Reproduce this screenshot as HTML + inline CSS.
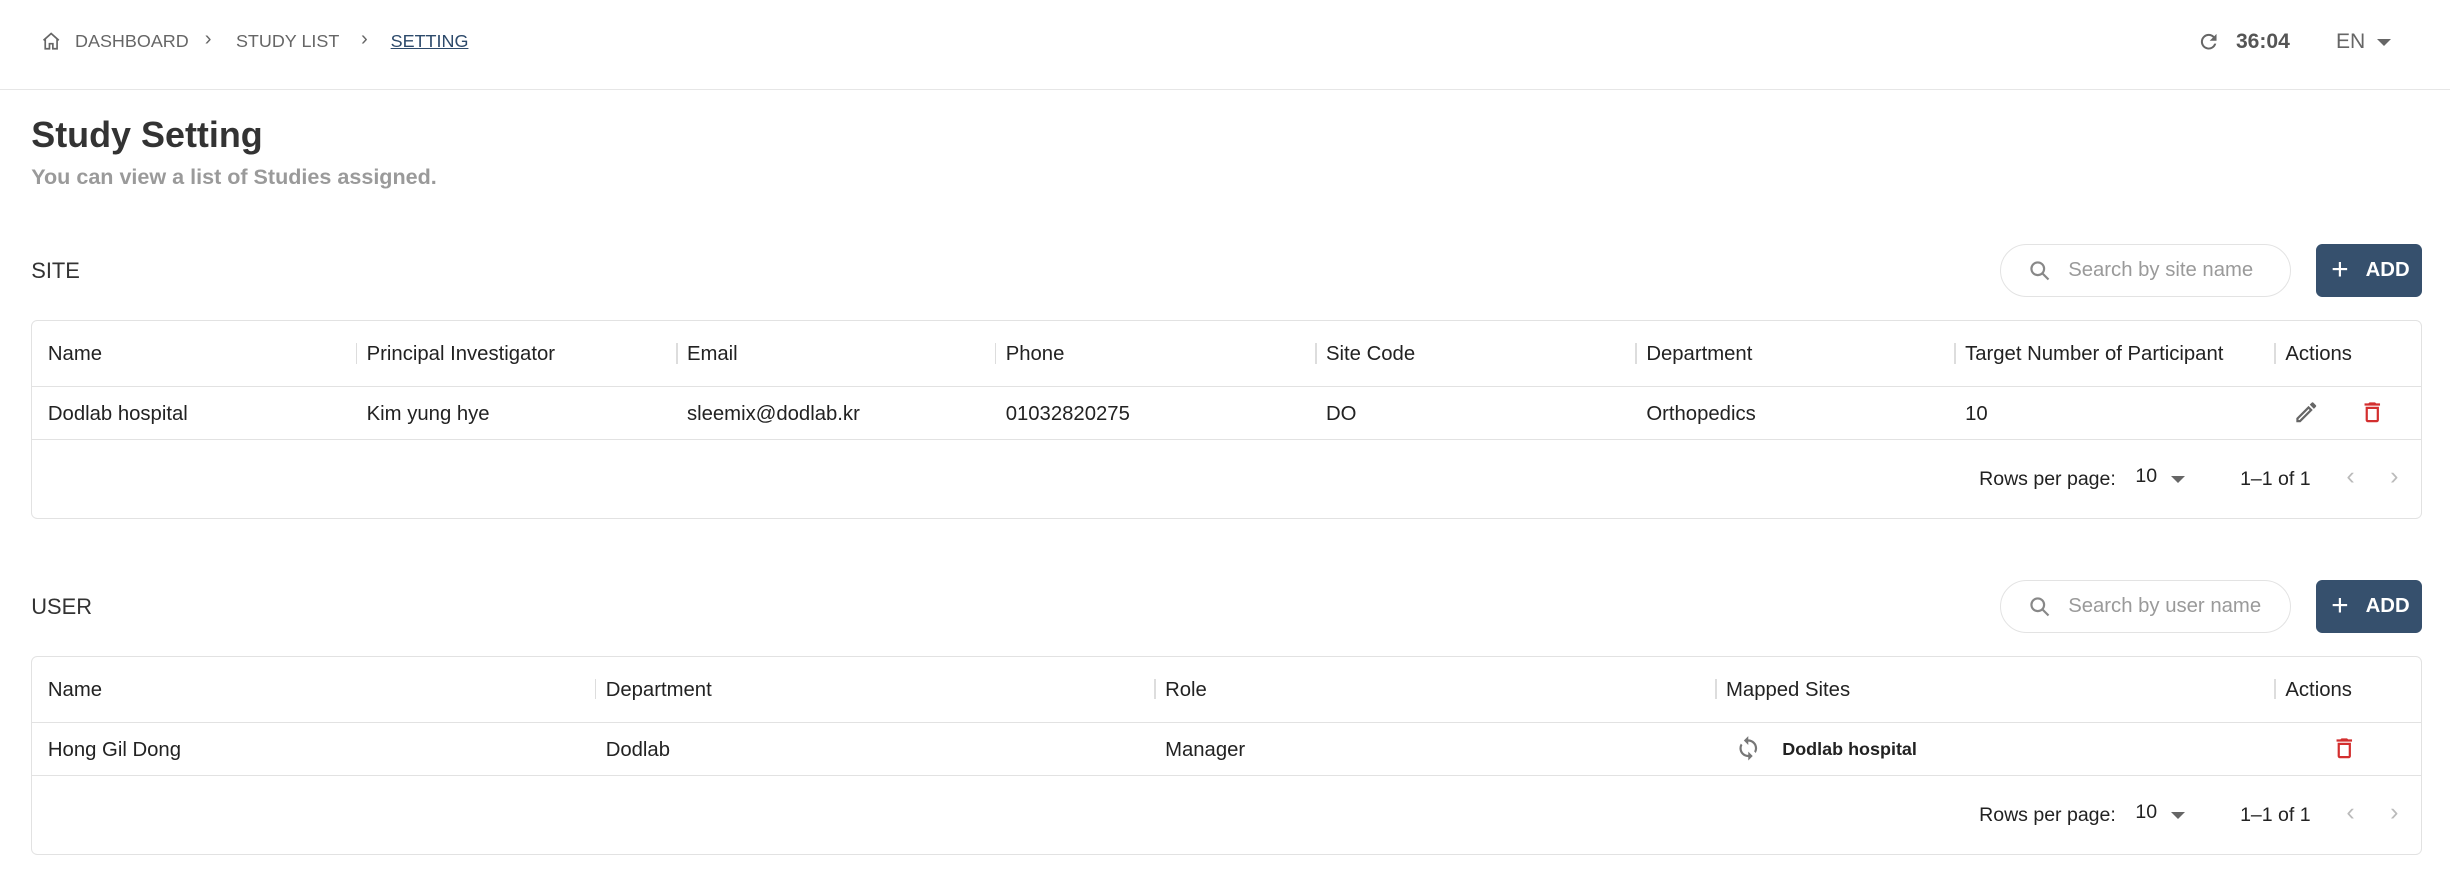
<!DOCTYPE html>
<html><head><meta charset="utf-8"><style>
*{margin:0;padding:0;box-sizing:border-box}
html,body{width:2450px;height:891px;overflow:hidden;background:#fff}
#z{zoom:1.5625;width:1568px;height:570px;position:relative;font-family:"Liberation Sans",sans-serif;color:#222}
.a{position:absolute;white-space:nowrap}
.bc{font-size:11.5px;color:#666;top:20px}
.hr{position:absolute;left:0;right:0;top:57px;border-top:1px solid #e6e6e6}
.tbl{position:absolute;left:20px;width:1530px;border:1px solid #e2e2e2;border-radius:4px}
.row{position:absolute;left:0;right:0;border-bottom:1px solid #e2e2e2}
.c{position:absolute;font-size:13px;color:#222;white-space:nowrap}
.sep{position:absolute;width:1px;height:13px;background:#ddd}
.search{position:absolute;left:1280px;width:186px;height:34px;border:1px solid #e3e3e3;border-radius:17px}
.search span{position:absolute;left:43px;top:9px;font-size:13px;color:#9a9a9a}
.add{position:absolute;left:1482px;width:68px;height:34px;background:#36506d;border-radius:4px;color:#fff;font-size:13px;font-weight:bold}
.sec{font-size:14px;left:20px;color:#333}
.ft{font-size:12.5px;color:#222}
</style></head><body><div id="z">
<svg class="a" style="left:26px;top:20px" width="13" height="13" viewBox="0 0 24 24" fill="none" stroke="#666" stroke-width="2"><path d="M3 11L12 3l9 8M5 9v12h5v-6h4v6h5V9"/></svg>
<div class="a bc" style="left:48px">DASHBOARD</div>
<div class="a bc" style="left:131px;top:18px;font-size:13px">›</div>
<div class="a bc" style="left:151px">STUDY LIST</div>
<div class="a bc" style="left:231px;top:18px;font-size:13px">›</div>
<div class="a bc" style="left:250px;color:#2d4a6b;text-decoration:underline">SETTING</div>
<svg class="a" style="left:1406px;top:19px" width="15" height="15" viewBox="0 0 24 24"><path fill="#666" d="M17.65 6.35A7.96 7.96 0 0 0 12 4a8 8 0 1 0 7.73 10h-2.08A6 6 0 1 1 12 6c1.66 0 3.14.69 4.22 1.78L13 11h7V4l-2.35 2.35z"/></svg>
<div class="a" style="left:1431px;top:19px;font-size:13.5px;font-weight:bold;color:#555">36:04</div>
<div class="a" style="left:1495px;top:19px;font-size:13.5px;color:#666">EN</div>
<div class="a" style="left:1521px;top:25px;border-left:5px solid transparent;border-right:5px solid transparent;border-top:5px solid #666"></div>
<div class="hr"></div>
<div class="a" style="left:20px;top:73px;font-size:23px;font-weight:bold;color:#333">Study Setting</div>
<div class="a" style="left:20px;top:105px;font-size:13.8px;font-weight:bold;color:#9a9a9a">You can view a list of Studies assigned.</div>

<div class="a sec" style="top:165px">SITE</div>
<div class="search" style="top:156px"><svg class="a" style="left:17px;top:9px" width="15" height="15" viewBox="0 0 24 24" fill="none" stroke="#888" stroke-width="2.2"><circle cx="10" cy="10" r="6.5"/><path d="M15 15l6 6"/></svg><span>Search by site name</span></div>
<div class="add" style="top:156px"><span class="a" style="left:10px;top:6px;font-size:19px;font-weight:normal">+</span><span class="a" style="left:32px;top:10px">ADD</span></div>
<div class="tbl" style="top:205px;height:127px">
 <div class="row" style="top:0;height:42px">
  <div class="c" style="left:10px;top:14px">Name</div>
  <div class="sep" style="left:207px;top:14px"></div><div class="c" style="left:214px;top:14px">Principal Investigator</div>
  <div class="sep" style="left:412px;top:14px"></div><div class="c" style="left:419px;top:14px">Email</div>
  <div class="sep" style="left:616px;top:14px"></div><div class="c" style="left:623px;top:14px">Phone</div>
  <div class="sep" style="left:821px;top:14px"></div><div class="c" style="left:828px;top:14px">Site Code</div>
  <div class="sep" style="left:1026px;top:14px"></div><div class="c" style="left:1033px;top:14px">Department</div>
  <div class="sep" style="left:1230px;top:14px"></div><div class="c" style="left:1237px;top:14px">Target Number of Participant</div>
  <div class="sep" style="left:1435px;top:14px"></div><div class="c" style="left:1442px;top:14px">Actions</div>
 </div>
 <div class="row" style="top:42px;height:34px">
  <div class="c" style="left:10px;top:10px">Dodlab hospital</div>
  <div class="c" style="left:214px;top:10px">Kim yung hye</div>
  <div class="c" style="left:419px;top:10px">sleemix@dodlab.kr</div>
  <div class="c" style="left:623px;top:10px">01032820275</div>
  <div class="c" style="left:828px;top:10px">DO</div>
  <div class="c" style="left:1033px;top:10px">Orthopedics</div>
  <div class="c" style="left:1237px;top:10px">10</div>
  <svg class="a" style="left:1447px;top:8px" width="17" height="17" viewBox="0 0 24 24"><path fill="#666" d="M3 17.25V21h3.75L17.81 9.94l-3.75-3.75L3 17.25zM5.92 19H5v-.92l9.06-9.06.92.92L5.92 19zM20.71 5.63l-2.34-2.34a1 1 0 0 0-1.41 0l-1.83 1.83 3.75 3.75 1.83-1.83a1 1 0 0 0 0-1.41z"/></svg>
  <svg class="a" style="left:1489px;top:8px" width="17" height="17" viewBox="0 0 24 24"><path fill="#d32f2f" d="M6 19a2 2 0 0 0 2 2h8a2 2 0 0 0 2-2V7H6v12zm2-10h8v10H8V9zm7.5-5l-1-1h-5l-1 1H5v2h14V4z"/></svg>
 </div>
 <div class="a ft" style="left:1246px;top:94px">Rows per page:</div>
 <div class="a ft" style="left:1346px;top:92px">10</div>
 <div class="a" style="left:1369px;top:99px;border-left:4.5px solid transparent;border-right:4.5px solid transparent;border-top:4.5px solid #666"></div>
 <div class="a ft" style="left:1413px;top:94px">1–1 of 1</div>
 <div class="a" style="left:1481px;top:90px;color:#bbb;font-size:16px">‹</div>
 <div class="a" style="left:1509px;top:90px;color:#bbb;font-size:16px">›</div>
</div>

<div class="a sec" style="top:380px">USER</div>
<div class="search" style="top:371px"><svg class="a" style="left:17px;top:9px" width="15" height="15" viewBox="0 0 24 24" fill="none" stroke="#888" stroke-width="2.2"><circle cx="10" cy="10" r="6.5"/><path d="M15 15l6 6"/></svg><span>Search by user name</span></div>
<div class="add" style="top:371px"><span class="a" style="left:10px;top:6px;font-size:19px;font-weight:normal">+</span><span class="a" style="left:32px;top:10px">ADD</span></div>
<div class="tbl" style="top:420px;height:127px">
 <div class="row" style="top:0;height:42px">
  <div class="c" style="left:10px;top:14px">Name</div>
  <div class="sep" style="left:360px;top:14px"></div><div class="c" style="left:367px;top:14px">Department</div>
  <div class="sep" style="left:718px;top:14px"></div><div class="c" style="left:725px;top:14px">Role</div>
  <div class="sep" style="left:1077px;top:14px"></div><div class="c" style="left:1084px;top:14px">Mapped Sites</div>
  <div class="sep" style="left:1435px;top:14px"></div><div class="c" style="left:1442px;top:14px">Actions</div>
 </div>
 <div class="row" style="top:42px;height:34px">
  <div class="c" style="left:10px;top:10px">Hong Gil Dong</div>
  <div class="c" style="left:367px;top:10px">Dodlab</div>
  <div class="c" style="left:725px;top:10px">Manager</div>
  <svg class="a" style="left:1090px;top:8px" width="17" height="17" viewBox="0 0 24 24"><path fill="#777" d="M12 4V1L8 5l4 4V6c3.31 0 6 2.69 6 6 0 1.01-.25 1.97-.7 2.8l1.46 1.46A7.93 7.93 0 0 0 20 12c0-4.42-3.58-8-8-8zm0 14c-3.31 0-6-2.69-6-6 0-1.01.25-1.97.7-2.8L5.24 7.74A7.93 7.93 0 0 0 4 12c0 4.42 3.58 8 8 8v3l4-4-4-4v3z"/></svg>
  <div class="c" style="left:1120px;top:10px;font-size:11.5px;font-weight:bold">Dodlab hospital</div>
  <svg class="a" style="left:1471px;top:8px" width="17" height="17" viewBox="0 0 24 24"><path fill="#d32f2f" d="M6 19a2 2 0 0 0 2 2h8a2 2 0 0 0 2-2V7H6v12zm2-10h8v10H8V9zm7.5-5l-1-1h-5l-1 1H5v2h14V4z"/></svg>
 </div>
 <div class="a ft" style="left:1246px;top:94px">Rows per page:</div>
 <div class="a ft" style="left:1346px;top:92px">10</div>
 <div class="a" style="left:1369px;top:99px;border-left:4.5px solid transparent;border-right:4.5px solid transparent;border-top:4.5px solid #666"></div>
 <div class="a ft" style="left:1413px;top:94px">1–1 of 1</div>
 <div class="a" style="left:1481px;top:90px;color:#bbb;font-size:16px">‹</div>
 <div class="a" style="left:1509px;top:90px;color:#bbb;font-size:16px">›</div>
</div>
</div></body></html>
